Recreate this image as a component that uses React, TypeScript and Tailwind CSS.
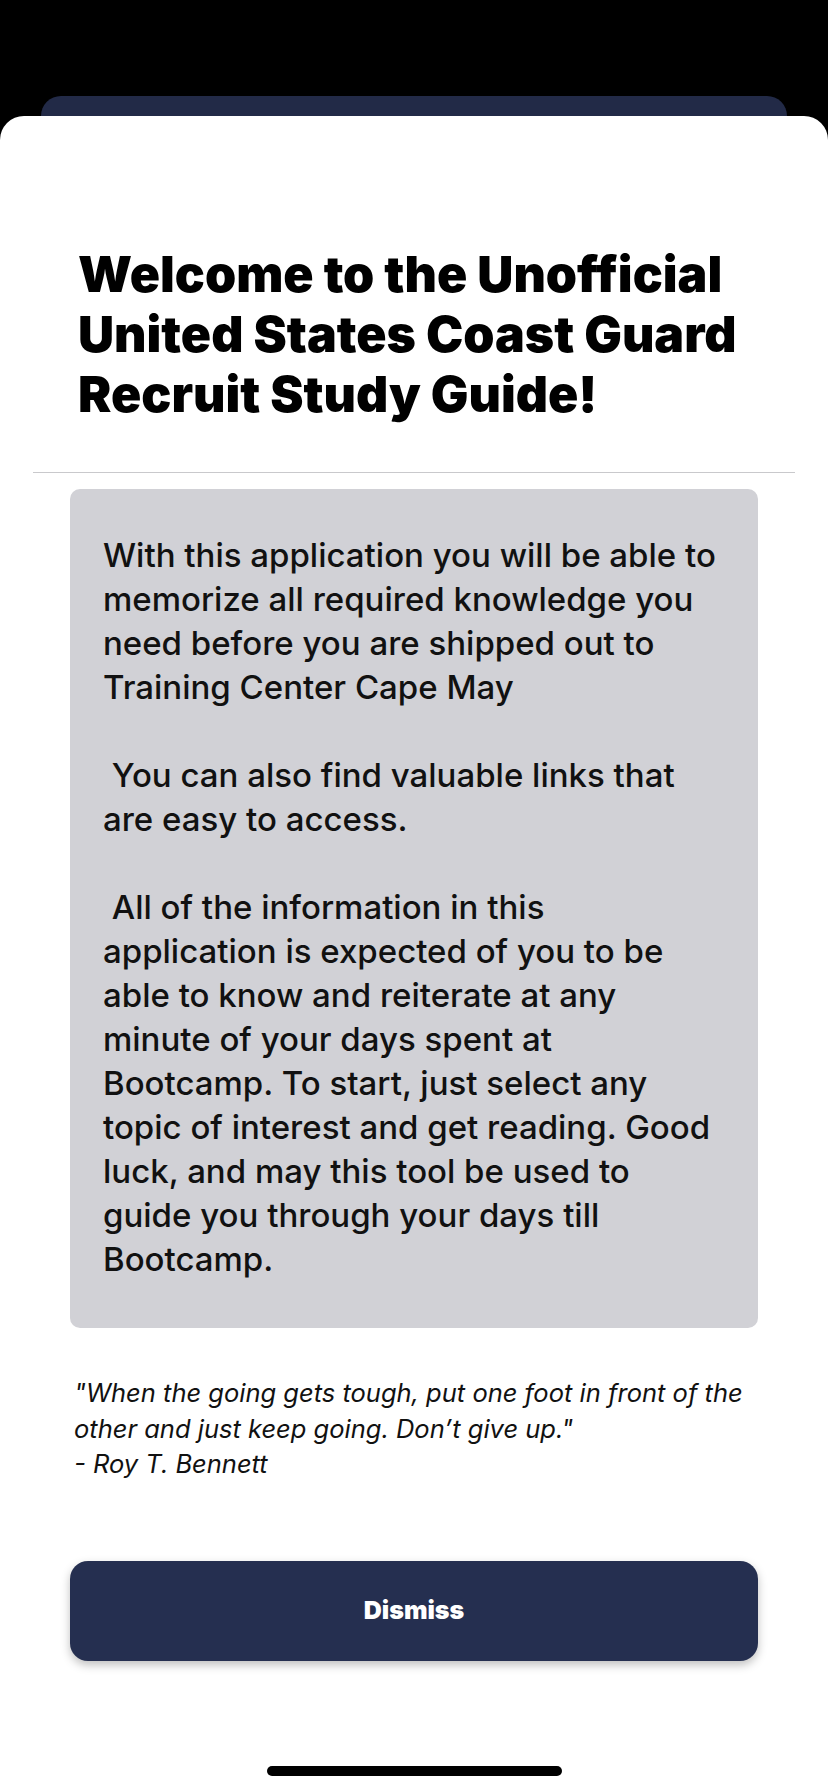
export default function App() {
  const body =
    "With this application you will be able to\nmemorize all required knowledge you\nneed before you are shipped out to\nTraining Center Cape May\n\n You can also find valuable links that\nare easy to access.\n\n All of the information in this\napplication is expected of you to be\nable to know and reiterate at any\nminute of your days spent at\nBootcamp. To start, just select any\ntopic of interest and get reading. Good\nluck, and may this tool be used to\nguide you through your days till\nBootcamp."

  return (
    <div className="flex h-[1792px] flex-col bg-black font-['Inter',sans-serif]">
      <div className="mx-[41px] mt-[96px] h-[20px] shrink-0 rounded-t-[20px] bg-[#222a47]" />
      <div className="flex flex-1 flex-col rounded-t-[24px] bg-white">
        <h1 className="px-[78px] pt-[128px] text-[50px] font-black leading-[60px] text-black">
          Welcome to the Unofficial
          <br />
          United States Coast Guard
          <br />
          Recruit Study Guide!
        </h1>
        <div className="mx-[33px] mt-[48px] h-px bg-[#c9c9cc]" />
        <div className="mx-[70px] mt-[16px] rounded-[10px] bg-[#d1d1d6] pt-[44px] pb-[47px] pl-[33px]">
          <p className="whitespace-pre text-[33px] font-medium leading-[44px] text-[#111]">{body}</p>
        </div>
        <p className="mt-[47px] ml-[74px] whitespace-pre text-[25.5px] italic leading-[35.5px] text-[#111]">
          {'"When the going gets tough, put one foot in front of the\nother and just keep going. Don’t give up."\n- Roy T. Bennett'}
        </p>
        <button className="mx-[70px] mt-[79px] flex h-[100px] items-center justify-center rounded-[18px] bg-[#252f50] text-[25px] font-black text-white shadow-[0_4px_10px_rgba(0,0,0,0.25)]">
          Dismiss
        </button>
        <div className="flex flex-1 items-end justify-center pb-[16px]">
          <div className="h-[10px] w-[295px] rounded-full bg-black" />
        </div>
      </div>
    </div>
  )
}
